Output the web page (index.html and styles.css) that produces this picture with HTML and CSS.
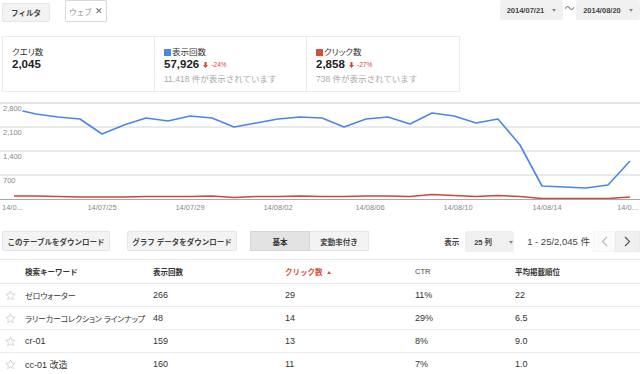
FILE: index.html
```html
<!DOCTYPE html>
<html lang="ja">
<head>
    <meta charset="UTF-8">
    <title>検索クエリ</title>
    <link rel="stylesheet" href="styles.css">
</head>
<body>

    <!-- Filter bar and date range -->
    <div class="toolbar">
        <div class="toolbar-left">
            <button class="btn btn-filter">フィルタ</button>
            <span class="chip">ウェブ <span class="chip-x">✕</span></span>
        </div>
        <div class="date-range">
            <button class="btn btn-date">2014/07/21 <span class="caret"></span></button>
            <span class="tilde">〜</span>
            <button class="btn btn-date">2014/08/20 <span class="caret"></span></button>
        </div>
    </div>

    <!-- Totals -->
    <div class="summary">
        <div class="stat">
            <div class="stat-title">クエリ数</div>
            <div class="stat-value">2,045</div>
        </div>
        <div class="stat">
            <div class="stat-title"><span class="swatch swatch-blue"></span>表示回数</div>
            <div class="stat-value">57,926 <span class="delta"><svg class="delta-arrow" width="5" height="6" viewBox="0 0 5 6"><path d="M1.5 0h2v3h1.5l-2.5 3l-2.5-3h1.5z"/></svg>-24%</span></div>
            <div class="stat-sub">11,418 件が表示されています</div>
        </div>
        <div class="stat">
            <div class="stat-title"><span class="swatch swatch-red"></span>クリック数</div>
            <div class="stat-value">2,858 <span class="delta"><svg class="delta-arrow" width="5" height="6" viewBox="0 0 5 6"><path d="M1.5 0h2v3h1.5l-2.5 3l-2.5-3h1.5z"/></svg>-27%</span></div>
            <div class="stat-sub">738 件が表示されています</div>
        </div>
    </div>

    <!-- Chart -->
    <svg class="chart" width="640" height="118" viewBox="0 0 640 118">
        <line class="grid grid-top" x1="0" y1="7" x2="640" y2="7"/>
        <line class="grid" x1="0" y1="31" x2="640" y2="31"/>
        <line class="grid" x1="0" y1="55" x2="640" y2="55"/>
        <line class="grid" x1="0" y1="79" x2="640" y2="79"/>
        <polyline class="series-red" points="14,100 36,100 58,100.5 80,101 102,101 124,101 146,100.5 168,100.5 190,100.5 212,100 234,101.5 256,100.5 278,100.5 300,100 322,100.5 344,100.5 366,100 388,100 410,100.5 432,98.5 454,99.5 476,100.5 498,99.5 520,100.5 542,102.5 564,102.5 586,102.5 608,102.5 630,101"/>
        <line class="axis" x1="0" y1="103.5" x2="640" y2="103.5"/>
        <polyline class="series-blue" points="14,13 36,18 58,21 80,23 102,38 124,29 146,22 168,25 190,20 212,22 234,31 256,27 278,23 300,21 322,22 344,31 366,23 388,21 410,28 432,17 454,20 476,27 498,23 520,49 542,90 564,91 586,92 608,89 630,65"/>
        <text class="y-label" x="3" y="15">2,800</text>
        <text class="y-label" x="3" y="39">2,100</text>
        <text class="y-label" x="3" y="63">1,400</text>
        <text class="y-label" x="3" y="87">700</text>
        <text class="x-label" x="2" y="114">14/0...</text>
        <text class="x-label" x="102" y="114" text-anchor="middle">14/07/25</text>
        <text class="x-label" x="190" y="114" text-anchor="middle">14/07/29</text>
        <text class="x-label" x="278" y="114" text-anchor="middle">14/08/02</text>
        <text class="x-label" x="370" y="114" text-anchor="middle">14/08/06</text>
        <text class="x-label" x="458" y="114" text-anchor="middle">14/08/10</text>
        <text class="x-label" x="547" y="114" text-anchor="middle">14/08/14</text>
        <text class="x-label" x="638" y="114" text-anchor="end">14/0...</text>
    </svg>

    <!-- Table controls -->
    <div class="actions">
        <div class="actions-left">
            <button class="btn btn-download">このテーブルをダウンロード</button>
            <button class="btn btn-download">グラフ データをダウンロード</button>
            <div class="toggle">
                <button class="btn btn-toggle active">基本</button>
                <button class="btn btn-toggle">変動率付き</button>
            </div>
        </div>
        <div class="pager">
            <span class="pager-label">表示</span>
            <button class="btn btn-select">25 列 <span class="caret"></span></button>
            <span class="pager-range">1 - 25/2,045 件</span>
            <button class="btn btn-nav btn-prev">
                <svg width="7" height="11" viewBox="0 0 7 11"><polyline points="6,1 1.5,5.5 6,10"/></svg>
            </button>
            <button class="btn btn-nav btn-next">
                <svg width="7" height="11" viewBox="0 0 7 11"><polyline points="1,1 5.5,5.5 1,10"/></svg>
            </button>
        </div>
    </div>

    <!-- Query table -->
    <table class="queries">
        <colgroup>
            <col class="col-star">
            <col class="col-keyword">
            <col class="col-impr">
            <col class="col-clicks">
            <col class="col-ctr">
            <col class="col-pos">
        </colgroup>
        <thead>
            <tr>
                <th></th>
                <th>検索キーワード</th>
                <th>表示回数</th>
                <th class="sorted">クリック数 <span class="sort-arrow"></span></th>
                <th class="plain">CTR</th>
                <th>平均掲載順位</th>
            </tr>
        </thead>
        <tbody>
            <tr>
                <td class="star"><svg width="11" height="11" viewBox="0 0 24 24"><polygon points="12,2 14.9,8.6 22,9.3 16.6,14 18.2,21 12,17.3 5.8,21 7.4,14 2,9.3 9.1,8.6"/></svg></td>
                <td class="keyword kana">ゼロウォーター</td>
                <td>266</td>
                <td>29</td>
                <td>11%</td>
                <td>22</td>
            </tr>
            <tr>
                <td class="star"><svg width="11" height="11" viewBox="0 0 24 24"><polygon points="12,2 14.9,8.6 22,9.3 16.6,14 18.2,21 12,17.3 5.8,21 7.4,14 2,9.3 9.1,8.6"/></svg></td>
                <td class="keyword kana">ラリーカーコレクション ラインナップ</td>
                <td>48</td>
                <td>14</td>
                <td>29%</td>
                <td>6.5</td>
            </tr>
            <tr>
                <td class="star"><svg width="11" height="11" viewBox="0 0 24 24"><polygon points="12,2 14.9,8.6 22,9.3 16.6,14 18.2,21 12,17.3 5.8,21 7.4,14 2,9.3 9.1,8.6"/></svg></td>
                <td class="keyword">cr-01</td>
                <td>159</td>
                <td>13</td>
                <td>8%</td>
                <td>9.0</td>
            </tr>
            <tr>
                <td class="star"><svg width="11" height="11" viewBox="0 0 24 24"><polygon points="12,2 14.9,8.6 22,9.3 16.6,14 18.2,21 12,17.3 5.8,21 7.4,14 2,9.3 9.1,8.6"/></svg></td>
                <td class="keyword">cc-01 改造</td>
                <td>160</td>
                <td>11</td>
                <td>7%</td>
                <td>1.0</td>
            </tr>
        </tbody>
    </table>

</body>
</html>
```

FILE: styles.css
```css
/* Global Styles */
body {
    font-family: "Liberation Sans", Arial, "Noto Sans CJK JP", sans-serif;
    background-color: white;
    color: #222;
    margin: 0;
    padding: 0;
}
.btn {
    font-family: "Liberation Sans", Arial, "Noto Sans CJK JP", sans-serif;
    background-color: #f3f3f3;
    border: 1px solid #e6e6e6;
    border-radius: 2px;
    color: #444;
    font-weight: bold;
    font-size: 7.5px;
    padding: 0;
    margin: 0;
    height: 20px;
    cursor: pointer;
}
.caret {
    display: inline-block;
    width: 0;
    height: 0;
    border-left: 2.5px solid transparent;
    border-right: 2.5px solid transparent;
    border-top: 3px solid #888;
    margin-left: 6px;
    vertical-align: middle;
}

/* Toolbar */
.toolbar {
    display: flex;
    justify-content: space-between;
    height: 22px;
}
.toolbar-left {
    display: flex;
    align-items: flex-start;
}
.btn-filter {
    width: 48px;
    height: 19px;
    margin: 3px 0 0 2px;
}
.chip {
    display: flex;
    align-items: center;
    justify-content: center;
    box-sizing: border-box;
    width: 42px;
    height: 22px;
    margin-left: 15px;
    border: 1px solid #d9d9d9;
    border-radius: 1px;
    color: #888;
    font-size: 7.5px;
    gap: 3px;
}
.chip-x {
    color: #666;
    font-size: 9px;
}
.date-range {
    display: flex;
    align-items: flex-start;
}
.btn-date {
    width: 63px;
    border-color: #f1f1f1;
    background-color: #f0f0f0;
}
.date-range .btn-date:last-child {
    width: 64px;
}
.tilde {
    width: 13px;
    text-align: center;
    font-size: 10px;
    color: #777;
    line-height: 18px;
}

/* Summary boxes */
.summary {
    display: flex;
    box-sizing: border-box;
    width: 458px;
    height: 56px;
    margin: 14px 0 0 2px;
    border: 1px solid #ececec;
}
.stat {
    box-sizing: border-box;
    width: 152px;
    padding: 10px 0 0 9px;
    border-right: 1px solid #ececec;
}
.stat:last-child {
    border-right: none;
}
.stat-title {
    font-size: 8.5px;
    line-height: 11px;
    color: #333;
    font-feature-settings: "palt";
}
.swatch {
    display: inline-block;
    width: 7px;
    height: 7px;
    margin-right: 1px;
    vertical-align: -0.5px;
}
.swatch-blue {
    background-color: #4a86e8;
}
.swatch-red {
    background-color: #dd4b39;
}
.stat-value {
    font-size: 11.5px;
    font-weight: bold;
    line-height: 12px;
    color: #222;
}
.delta {
    font-size: 6.5px;
    font-weight: normal;
    color: #d14836;
    vertical-align: 1px;
}
.delta-arrow {
    fill: #d14836;
    margin: 0 3px 0 1px;
    vertical-align: -1px;
}
.stat-sub {
    margin-top: 2px;
    font-size: 8.5px;
    line-height: 13px;
    color: #aaa;
}

/* Chart */
.chart {
    display: block;
    margin-top: 4px;
}
.chart .grid {
    stroke: #d4d4d4;
    stroke-width: 1;
}
.chart .grid-top {
    stroke: #e3e3e3;
    stroke-width: 2;
}
.chart .axis {
    stroke: #a8a8a8;
    stroke-width: 1;
}
.series-blue {
    fill: none;
    stroke: #4a86e8;
    stroke-width: 1.6;
    stroke-linejoin: round;
}
.series-red {
    fill: none;
    stroke: #cf4736;
    stroke-width: 1.4;
    stroke-linejoin: round;
}
.y-label,
.x-label {
    font-family: "Liberation Sans", Arial, sans-serif;
    font-size: 7.5px;
    fill: #888;
}
.y-label {
    stroke: white;
    stroke-width: 3px;
    paint-order: stroke;
}

/* Table controls */
.actions {
    display: flex;
    justify-content: space-between;
    align-items: center;
    height: 22px;
    margin-top: 16px;
}
.actions-left {
    display: flex;
    align-items: center;
    padding-left: 2px;
}
.btn-download {
    width: 108px;
    margin-right: 17px;
}
.btn-download + .btn-download {
    width: 110px;
    margin-right: 13px;
}
.toggle {
    display: flex;
}
.btn-toggle {
    width: 60px;
    border-radius: 0;
}
.btn-toggle + .btn-toggle {
    width: 59px;
    border-left: none;
}
.btn-toggle.active {
    background-color: #e3e3e3;
    border-color: #d6d6d6;
    color: #333;
}
.pager {
    display: flex;
    align-items: center;
}
.pager-label {
    font-size: 7.5px;
    font-weight: bold;
    color: #444;
    margin-right: 6px;
}
.btn-select {
    width: 49px;
    height: 21px;
    text-align: left;
    padding-left: 8px;
    border-color: #f0f0f0;
    background-color: #f0f0f0;
}
.btn-select .caret {
    margin-left: 15px;
}
.pager-range {
    font-size: 9.5px;
    color: #444;
    margin: 0 3px 0 13px;
}
.btn-nav {
    display: flex;
    align-items: center;
    justify-content: center;
    height: 21px;
    border-radius: 0;
}
.btn-nav svg polyline {
    fill: none;
    stroke-width: 1.2;
}
.btn-prev {
    width: 22px;
    background-color: #fbfbfb;
    border-color: #f6f6f6;
}
.btn-prev svg polyline {
    stroke: #bbb;
}
.btn-next {
    width: 25px;
    background-color: #f0f0f0;
    border-color: #eaeaea;
}
.btn-next svg polyline {
    stroke: #555;
}

/* Query table */
.queries {
    width: 640px;
    margin-top: 7px;
    border-collapse: collapse;
    table-layout: fixed;
}
.col-star { width: 25px; }
.col-keyword { width: 128px; }
.col-impr { width: 132px; }
.col-clicks { width: 130px; }
.col-ctr { width: 100px; }
.col-pos { width: 125px; }
.queries th {
    height: 23px;
    padding: 0;
    text-align: left;
    font-size: 7.5px;
    font-weight: bold;
    color: #333;
    border-top: 1px solid #e8e8e8;
    border-bottom: 1px solid #e8e8e8;
}
.queries th.plain {
    font-weight: normal;
    color: #444;
}
.queries th.sorted {
    color: #dd4b39;
}
.sort-arrow {
    display: inline-block;
    width: 0;
    height: 0;
    border-left: 2px solid transparent;
    border-right: 2px solid transparent;
    border-bottom: 3px solid #dd4b39;
    margin-left: 2px;
    vertical-align: 1px;
}
.queries td {
    height: 22px;
    padding: 0;
    font-size: 9px;
    color: #333;
    border-bottom: 1px solid #ededed;
    white-space: nowrap;
}
.queries td.keyword {
    overflow: visible;
}
.queries td.kana {
    font-size: 8px;
    letter-spacing: -0.2px;
    font-feature-settings: "palt";
}
.queries td.star {
    padding-left: 5px;
}
.star svg {
    display: block;
}
.star polygon {
    fill: none;
    stroke: #c8c8c8;
    stroke-width: 1.6;
    stroke-linejoin: round;
}
```
